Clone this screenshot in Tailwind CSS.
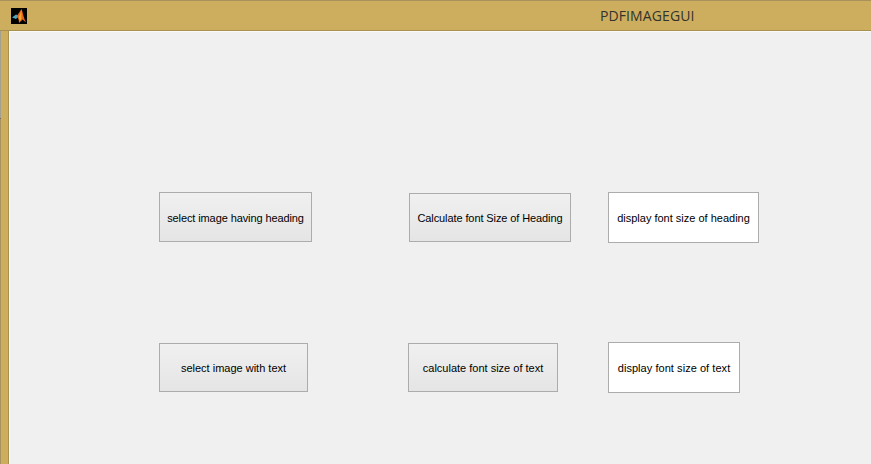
<!DOCTYPE html>
<html lang="en">
  <head>
    <meta charset="UTF-8" />
    <title>PDFIMAGEGUI</title>
    <script src="https://cdn.jsdelivr.net/npm/@tailwindcss/browser@4"></script>
  </head>
  <body class="bg-[#cdae5f] h-[464px] w-[871px] overflow-hidden flex flex-col font-['Liberation_Sans',sans-serif]">
    <!-- title bar -->
    <div class="h-[31px] shrink-0 border-t border-b border-t-[#a8915a] border-b-[#a8914f] flex items-center relative">
      <svg class="ml-[11px] w-[16px] h-[16px]" viewBox="0 0 16 16">
        <rect width="16" height="16" fill="#000" />
        <path d="M1 9.5 L5 6.5 L8 8 L5 11 Z" fill="#4aa6c8" />
        <path d="M5.5 8.5 L10.5 1 C12 5 13 11 15 14.5 L11.5 11.5 L8 15 C8 12.5 7.5 10 5.5 8.5 Z" fill="#e4601a" />
        <path d="M10.5 1.5 C9.5 5 9 7 7.5 9 C8.5 11 8.5 13 8.5 14 L10.5 11 Z" fill="#f5a62e" />
      </svg>
      <span class="absolute left-[600px] top-[5px] text-[14px] leading-[19px] text-[#33322c] font-['Open_Sans',sans-serif] tracking-[0.1px]">PDFIMAGEGUI</span>
    </div>

    <div class="flex-1 flex">
      <!-- left window edge -->
      <div class="w-[1px] flex flex-col bg-[#a8915a]">
        <div class="h-[87px] bg-[#a3a08f]"></div>
        <div class="h-[1px] bg-[#6f6f68]"></div>
      </div>
      <div class="w-[7px]"></div>
      <div class="w-[1px] bg-[#a8914f]"></div>

      <!-- panel -->
      <div class="flex-1 bg-[#f0f0f0] border-l border-t border-[#fafafa] text-[11px] text-black">
        <div class="flex items-start mt-[160px]">
          <div class="ml-[149px] w-[153px] h-[50px] pt-[2px] tracking-[-0.1px] border border-[#acacac] bg-gradient-to-b from-[#f0f0f0] to-[#e5e5e5] flex items-center justify-center">select image having heading</div>
          <div class="ml-[97px] mt-[1px] w-[162px] h-[49px] pt-[1px] tracking-[-0.1px] border border-[#acacac] bg-gradient-to-b from-[#f0f0f0] to-[#e5e5e5] flex items-center justify-center">Calculate font Size of Heading</div>
          <div class="ml-[37px] w-[151px] h-[51px] pt-[1px] border border-[#acacac] bg-white flex items-center justify-center">display font size of heading</div>
        </div>
        <div class="flex items-start mt-[99px]">
          <div class="ml-[149px] mt-[1px] w-[149px] h-[49px] pt-[1px] border border-[#acacac] bg-gradient-to-b from-[#f0f0f0] to-[#e5e5e5] flex items-center justify-center">select image with text</div>
          <div class="ml-[100px] mt-[1px] w-[150px] h-[49px] pt-[1px] border border-[#acacac] bg-gradient-to-b from-[#f0f0f0] to-[#e5e5e5] flex items-center justify-center">calculate font size of text</div>
          <div class="ml-[50px] w-[132px] h-[51px] pt-[1px] tracking-[0.05px] border border-[#acacac] bg-white flex items-center justify-center">display font size of text</div>
        </div>
      </div>
    </div>
  </body>
</html>
